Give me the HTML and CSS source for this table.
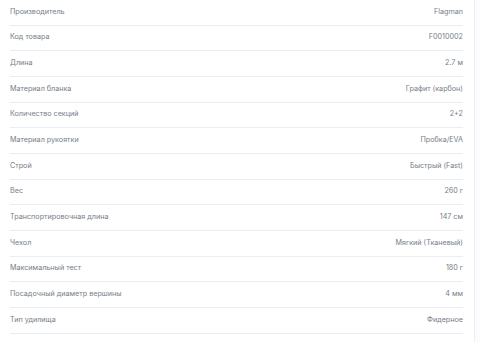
FILE: index.html
```html
<!DOCTYPE html>
<html lang="ru">
<head>
<meta charset="utf-8">
<link rel="stylesheet" href="styles.css">
</head>
<body>
<div class="page">
  <div class="specs">
    <div class="row"><span class="label">Производитель</span><span class="value">Flagman</span></div>
    <div class="row"><span class="label">Код товара</span><span class="value">F0010002</span></div>
    <div class="row"><span class="label">Длина</span><span class="value">2.7 м</span></div>
    <div class="row"><span class="label">Материал бланка</span><span class="value">Графит (карбон)</span></div>
    <div class="row"><span class="label">Количество секций</span><span class="value">2+2</span></div>
    <div class="row"><span class="label">Материал рукоятки</span><span class="value">Пробка/EVA</span></div>
    <div class="row"><span class="label">Строй</span><span class="value">Быстрый (Fast)</span></div>
    <div class="row"><span class="label">Вес</span><span class="value">260 г</span></div>
    <div class="row"><span class="label">Транспортировочная длина</span><span class="value">147 см</span></div>
    <div class="row"><span class="label">Чехол</span><span class="value">Мягкий (Тканевый)</span></div>
    <div class="row"><span class="label">Максимальный тест</span><span class="value">180 г</span></div>
    <div class="row"><span class="label">Посадочный диаметр вершины</span><span class="value">4 мм</span></div>
    <div class="row"><span class="label">Тип удилища</span><span class="value">Фидерное</span></div>
  </div>
  <div class="side"></div>
</div>
</body>
</html>
```

FILE: styles.css
```css
html, body {
  margin: 0;
  padding: 0;
  background: #ffffff;
}
body {
  font-family: Inter, "Noto Sans", sans-serif;
  font-size: 7.2px;
  color: #767d88;
}
.page {
  display: flex;
  height: 342px;
  overflow: hidden;
}
.specs {
  width: 453px;
  margin-left: 10px;
  margin-right: 11px;
  display: flex;
  flex-direction: column;
}
.row {
  box-sizing: border-box;
  display: flex;
  justify-content: space-between;
  align-items: center;
  height: 25.67px;
  flex: none;
  border-bottom: 1px solid #e9eef4;
  padding-bottom: 2px;
}
.label,
.value {
  color: #767d88;
}
.side {
  flex: 1;
  border-left: 1px solid #eceff3;
  background: #fbfcfd;
}
```
